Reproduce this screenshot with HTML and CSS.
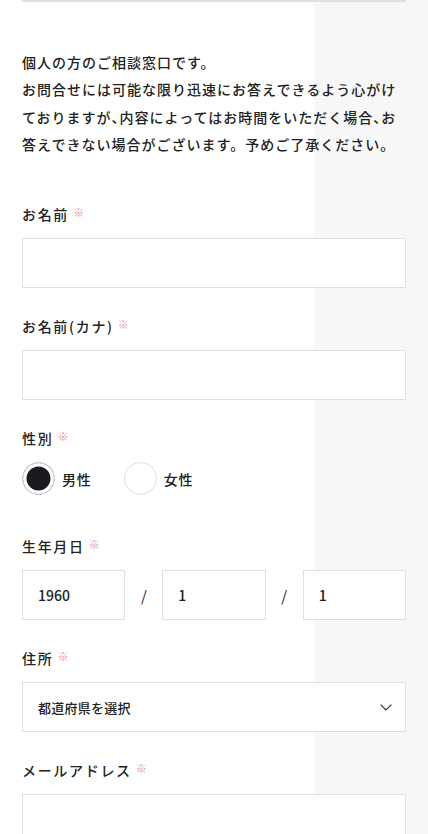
FILE: index.html
```html
<!DOCTYPE html>
<html lang="ja">
<head>
<meta charset="utf-8">
<meta name="viewport" content="width=device-width, initial-scale=1">
<title>お問合せ</title>
<link rel="stylesheet" href="styles.css">
</head>
<body>
<div class="page">
  <div class="prev-box"></div>
  <p class="intro">個人の方のご相談窓口です。<br>お問合せには可能な限り迅速にお答えできるよう心がけておりますが<span class="halt">、</span>内容によってはお時間をいただく場合<span class="halt">、</span>お答えできない場合がございます。予めご了承ください。</p>

  <form class="form">
    <div class="field">
      <label class="label" for="name">お名前<span class="req">※</span></label>
      <input class="input" id="name" type="text">
    </div>

    <div class="field">
      <label class="label" for="kana">お名前(カナ)<span class="req">※</span></label>
      <input class="input" id="kana" type="text">
    </div>

    <div class="field field-gender">
      <div class="label">性別<span class="req">※</span></div>
      <div class="radios">
        <label class="radio"><input class="radio-input" type="radio" name="sex" checked><span class="radio-text">男性</span></label>
        <label class="radio"><input class="radio-input" type="radio" name="sex"><span class="radio-text">女性</span></label>
      </div>
    </div>

    <div class="field">
      <div class="label">生年月日<span class="req">※</span></div>
      <div class="date-row">
        <input class="input" type="text" value="1960">
        <span class="slash">/</span>
        <input class="input" type="text" value="1">
        <span class="slash">/</span>
        <input class="input" type="text" value="1">
      </div>
    </div>

    <div class="field">
      <label class="label" for="pref">住所<span class="req">※</span></label>
      <div class="select-wrap">
        <select class="select" id="pref">
          <option>都道府県を選択</option>
        </select>
        <svg class="chevron" width="12" height="7" viewBox="0 0 12 7" aria-hidden="true"><path d="M0.6 0.6 L6 6 L11.4 0.6" fill="none" stroke="#333" stroke-width="1.2"/></svg>
      </div>
    </div>

    <div class="field">
      <label class="label" for="mail">メールアドレス<span class="req">※</span></label>
      <input class="input" id="mail" type="email">
    </div>
  </form>
</div>
</body>
</html>
```

FILE: styles.css
```css
html, body {
  margin: 0;
  padding: 0;
}
body {
  background: linear-gradient(to right, #ffffff 314px, #f7f7f7 314px);
  font-family: "Noto Sans CJK JP", "Noto Sans", sans-serif;
  color: #222;
  min-height: 834px;
}
.page {
  padding: 0 22px;
}
.prev-box {
  height: 0;
  border-bottom: 2px solid #e0e0e0;
}
.intro {
  margin: 47px 0 46px;
  font-size: 14px;
  font-weight: 500;
  line-height: 27.3px;
  letter-spacing: 1px;
}
.halt {
  font-feature-settings: "halt";
  letter-spacing: 0;
  margin-right: 1px;
}
.form {
  margin: 0;
}
.field {
  margin-bottom: 28px;
}
.label {
  display: flex;
  align-items: center;
  height: 20px;
  font-size: 14px;
  font-weight: 500;
  line-height: 20px;
  letter-spacing: 0.12em;
  margin-bottom: 14px;
}
.req {
  color: #e28ea3;
  font-size: 11px;
  line-height: 1;
  margin-left: 4px;
  margin-top: -3px;
  letter-spacing: 0;
}
.input {
  display: block;
  box-sizing: border-box;
  width: 100%;
  height: 50px;
  margin: 0;
  border: 1.5px solid #e0e0e0;
  border-radius: 0;
  background: #fff;
  padding: 0 15px;
  font-family: "Noto Sans CJK JP", "Noto Sans", sans-serif;
  font-size: 14px;
  font-weight: 500;
  color: #222;
  outline: none;
}
.radios {
  display: flex;
  align-items: center;
  column-gap: 32px;
  height: 33px;
  padding-bottom: 13px;
}
.radio {
  display: flex;
  align-items: center;
  gap: 7px;
}
.radio-input {
  appearance: none;
  -webkit-appearance: none;
  box-sizing: border-box;
  width: 33px;
  height: 33px;
  margin: 0;
  border: 1.5px solid #dedede;
  border-radius: 50%;
  background: #fff;
}
.radio-input:checked {
  background: #1b1b1f;
  box-shadow: inset 0 0 0 3.5px #fff;
}
.radio-text {
  font-size: 14px;
  font-weight: 500;
  line-height: 20px;
  letter-spacing: 0.06em;
}
.date-row {
  display: grid;
  grid-template-columns: 1fr 37px 1fr 37px 1fr;
  align-items: center;
}
.slash {
  text-align: center;
  font-size: 15px;
  font-weight: 400;
  color: #222;
}
.select-wrap {
  position: relative;
}
.select {
  display: block;
  box-sizing: border-box;
  width: 100%;
  height: 50px;
  margin: 0;
  appearance: none;
  -webkit-appearance: none;
  border: 1.5px solid #e0e0e0;
  border-radius: 0;
  background: #fff;
  padding: 0 15px;
  font-family: "Noto Sans CJK JP", "Noto Sans", sans-serif;
  font-size: 13px;
  font-weight: 500;
  letter-spacing: 0.02em;
  color: #222;
}
.chevron {
  position: absolute;
  right: 14px;
  top: 22px;
  pointer-events: none;
}
```
